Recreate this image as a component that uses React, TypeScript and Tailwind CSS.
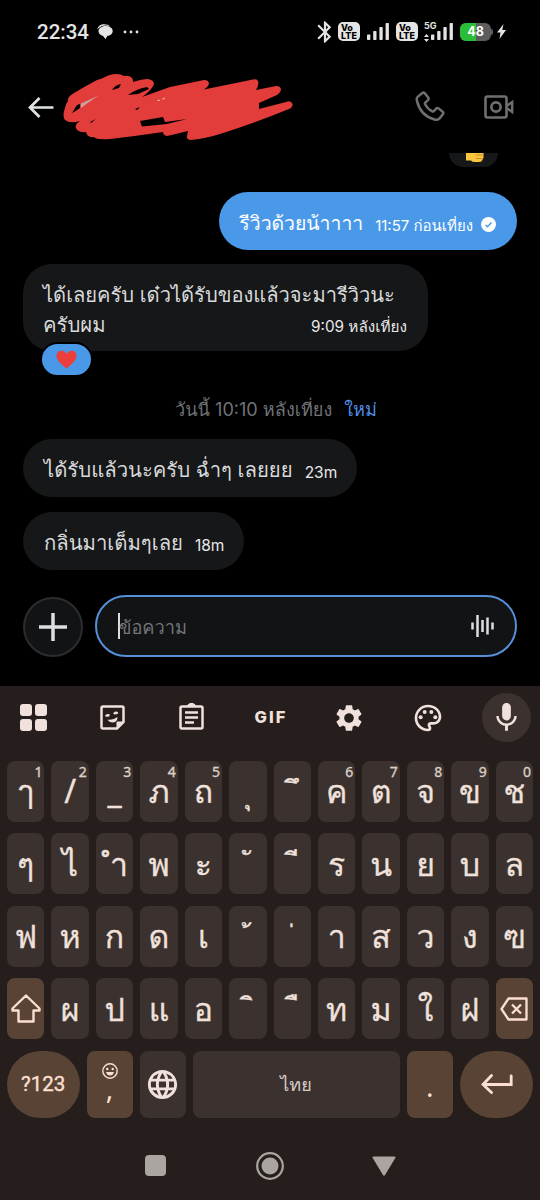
import React, { ReactNode } from "react"
import { MdBluetooth, MdLanguage, MdMic, MdOutlinePalette, MdSettings } from "react-icons/md"

type KeyType = { label: string, hint?: string, markClass?: string }

// Thai vowel and tone marks need a carrier, otherwise a dotted circle is drawn
const CARRIER = "\u00a0"

const VOWEL_ABOVE = "text-[27px] relative left-[3px] -top-0.5"
const VOWEL_BELOW = "text-[27px] relative top-0.5"
const SHORT_ABOVE = "text-[25px] relative -top-[3px]"
const TONE_ABOVE = "text-[26px] relative -left-px top-1"

const rowOne: KeyType[] = [
   { label: "ๅ", hint: "1" }, { label: "/", hint: "2" }, { label: "_", hint: "3" }, { label: "ภ", hint: "4" },
   { label: "ถ", hint: "5" }, mark("ุ", VOWEL_BELOW), mark("ึ", VOWEL_ABOVE), { label: "ค", hint: "6" },
   { label: "ต", hint: "7" }, { label: "จ", hint: "8" }, { label: "ข", hint: "9" }, { label: "ช", hint: "0" },
]
const rowTwo: KeyType[] = [
   ...toKeys(["ๆ", "ไ", CARRIER + "ำ", "พ", "ะ"]),
   mark("ั", SHORT_ABOVE), mark("ี", VOWEL_ABOVE),
   ...toKeys(["ร", "น", "ย", "บ", "ล"]),
]
const rowThree: KeyType[] = [
   ...toKeys(["ฟ", "ห", "ก", "ด", "เ"]),
   mark("้", TONE_ABOVE), mark("่", TONE_ABOVE),
   ...toKeys(["า", "ส", "ว", "ง", "ฃ"]),
]
const rowFour: KeyType[] = [
   ...toKeys(["ผ", "ป", "แ", "อ"]),
   mark("ิ", VOWEL_ABOVE), mark("ื", VOWEL_ABOVE),
   ...toKeys(["ท", "ม", "ใ", "ฝ"]),
]

function toKeys(labels: string[]): KeyType[] {
   return labels.map(label => ({ label }))
}

function mark(sign: string, markClass: string): KeyType {
   return { label: CARRIER + sign, markClass }
}

function App() {
   return (
      <div className="w-[540px] h-[1200px] flex flex-col overflow-hidden bg-black text-[#d9dadb] font-['Inter','Loma']">
         <StatusBar/>
         <ChatHeader/>
         <Conversation/>
         <MessageInput/>
         <Keyboard/>
      </div>
   )
}

export default App


function StatusBar() {
   return (
      <div className="h-[63px] flex shrink-0 items-center pl-[37px] pr-[34px] text-[#e4e4e4]">
         <span className="text-[20.500px] leading-none pt-0.5 font-medium font-['Roboto',sans-serif]">22:34</span>
         <svg className="ml-2" width="16" height="16" viewBox="0 0 16 16" fill="currentColor">
            <path d="M.3 5.500C.8 2 4 .2 7 .2c3 0 5 .8 6 2.200C10 1.200 7.500 1.200 5 2 3 2.700 1.500 4 .3 5.500z"/>
            <path d="M8.500 2C12.500 2 15.700 4 15.700 7s-2.700 4.600-5.200 4.800L8.500 15 6 12C3.500 11.500 1.500 9.500 1.500 7s3-5 7-5z"/>
         </svg>
         <svg className="ml-2.5" width="16" height="4" viewBox="0 0 16 4" fill="currentColor">
            <circle cx="2" cy="2" r="1.400"/><circle cx="8" cy="2" r="1.400"/><circle cx="14" cy="2" r="1.400"/>
         </svg>
         <div className="ml-auto flex items-center">
            <MdBluetooth className="-mr-[7px]" size={26}/>
            <VolteBadge/>
            <SignalBars/>
            <VolteBadge/>
            <div className="ml-1.5 -mr-[11px] w-[11px] h-5 flex flex-col justify-between">
               <span className="text-[9px] leading-[8px] font-bold">5G</span>
               <svg width="5" height="8" viewBox="0 0 5 8" fill="currentColor">
                  <path d="M2.500 0 5 3H0zM2.500 8 0 5h5z"/>
               </svg>
            </div>
            <SignalBars/>
            <div className="ml-[7px] relative w-[31px] h-[18px] rounded-md overflow-hidden bg-[#5c5c5e] flex items-center justify-center">
               <div className="absolute inset-y-0 left-0 w-4 bg-[#2bbd37]"/>
               <span className="relative top-px text-[12.500px] leading-none font-bold text-white">48</span>
            </div>
            <div className="w-0.5 h-1.5 rounded-r-sm bg-[#5c5c5e]"/>
            <svg className="ml-1" width="9" height="15" viewBox="0 0 9 15" fill="currentColor">
               <path d="M6.500 0 0 8.500h3.500L2.500 15 9 6H5.300z"/>
            </svg>
         </div>
      </div>
   )
}

function VolteBadge() {
   return (
      <div className="ml-[7px] w-[22px] h-[19px] rounded-[5px] bg-[#e4e4e4] text-black flex flex-col items-center justify-center font-extrabold text-[9px] leading-[8px]">
         <span className="-ml-1">Vo</span>
         <span>LTE</span>
      </div>
   )
}

function SignalBars() {
   return (
      <svg className="ml-[7px]" width="22" height="17" viewBox="0 0 22 17" fill="currentColor">
         <rect x="0" y="11.500" width="3.300" height="5.500" rx=".8"/>
         <rect x="6.200" y="8" width="3.300" height="9" rx=".8"/>
         <rect x="12.400" y="4" width="3.300" height="13" rx=".8"/>
         <rect x="18.600" y="0" width="3.300" height="17" rx=".8"/>
      </svg>
   )
}

function ChatHeader() {
   return (
      <div className="h-[90px] flex shrink-0 items-start pl-7 pr-[25px]">
         <svg className="mt-[34px]" width="26" height="21" viewBox="0 0 26 21" fill="none" stroke="#dfe2e3" strokeWidth="2.700">
            <path d="M11.500 1 2 10.500l9.500 9.500M2 10.500h23.500"/>
         </svg>
         <Scribble/>
         <svg className="ml-auto mt-7" width="30" height="31" viewBox="0 0 30 31" fill="none" stroke="#6f6f6f" strokeWidth="2.500">
            <path d="M7 2.200Q8.600.9 9.900 2.400L13.300 6.800Q14.100 8 13 9.100L10.300 11.700Q9.600 12.400 10.100 13.300 12.500 18 17.300 20.400 18.200 20.800 18.900 20.100L21.300 17.500Q22.400 16.500 23.600 17.400L27.600 20.700Q28.900 21.900 27.900 23.200L24.600 27.300Q22.500 29.400 19.500 28.500C10 25.800 4 18.800 1.900 9.600Q1.300 6.900 2.900 5.600z"/>
         </svg>
         <svg className="ml-[39px] mt-[32px]" width="31" height="24" viewBox="0 0 31 24" fill="none" stroke="#6f6f6f" strokeWidth="2.600">
            <rect x="1.500" y="1.500" width="21" height="21" rx="2"/>
            <circle cx="12" cy="12" r="4.600"/>
            <path d="M23 10.800 28.200 7v10L23 13.200" strokeWidth="2.400"/>
         </svg>
      </div>
   )
}

function Scribble() {
   return (
      <svg className="ml-[6px] mt-[7px]" width="236" height="72" viewBox="60 70 236 72">
         <path fill="#e23d3b" d="M68 101Q67 97 74 93L86 86 97 80Q101 79 103 78 110 74 116 74 121 74 124 76 131 75 133 80L133 82Q142 79 148 79 154 80 154 84 152 90 142 97 156 92 170 87L204 80Q209 80 209 84 208 87 204 89.500L253 79.500Q258 78 258.500 83 258 87 256 90L276 86Q281 86 281 90 280 93 277 95L259 103V109L286 102Q291 100 292.500 104 293 107 289 109 252 124 220 134 204 139 190 140 186 139 187 136L188 131Q176 134 167 136 163 135 163 132 136 136 110 139 96 140 94 137 87 138 86 132 77 133 75.500 127 76 123 80 121 70 124 65 120 62 116 65 108 66 103 68 101z"/>
         <path fill="#000" d="M72 113 77 105 80 104 80 108 74 112zM112 90Q115 85 121 84L119 88zM128 95Q136 89 147 87L149 89 138 94zM140 121 163 117 165 122 187 119 167 124 142 126.500zM90 122 96 119 91 123zM135 109 140 107 137 110z"/>
         <path fill="#c9a5a2" d="M81 103.500 99 95.500 89 102 81 108z"/>
         <path fill="#f3d3d0" d="M157 101 159 99.500 160 101zM162 99 165 97.500 164 99.500z"/>
      </svg>
   )
}

function Conversation() {
   return (
      <div className="h-[442px] flex flex-col items-start shrink-0 px-[23px] text-[20.300px]">
         <div className="self-end mr-[19px] w-[49px] h-[14px] shrink-0 rounded-b-[14px] overflow-hidden bg-[#161718] flex justify-center">
            <svg className="ml-0.5" width="18" height="9" viewBox="0 0 18 9">
               <path fill="#fcc73f" d="M0 0h17.500v4Q17.500 6 16.500 6.500 16 9 13 9H9Q6 9 5 7.500H0z"/>
               <path stroke="#c98a1c" strokeWidth="1" fill="none" d="M9.500 2h8M10 5.500h6.500"/>
            </svg>
         </div>
         <div className="mt-[25px] h-[58px] shrink-0 self-end rounded-[29px] bg-[#4a99e9] text-white pl-5 pr-[21px] flex items-baseline leading-[58px]">
            <span className="relative top-0.5 text-[19.400px]">รีวิวด้วยน้าาาา</span>
            <span className="ml-3 relative top-[3px] text-[15px]">11:57 ก่อนเที่ยง</span>
            <svg className="ml-2 relative top-[4px]" width="15" height="15" viewBox="0 0 15 15">
               <circle cx="7.500" cy="7.500" r="7.500" fill="#fff"/>
               <path d="M4.500 8l2 1.800L10.500 5.500" fill="none" stroke="#4a99e9" strokeWidth="1.400"/>
            </svg>
         </div>
         <div className="relative mt-3.5 w-[405px] h-[87px] shrink-0 rounded-[29px] bg-[#161718] pl-5 pr-[21px] pt-[17px] leading-[29px]">
            <p className="whitespace-nowrap text-[20.100px]">ได้เลยครับ เด๋วได้รับของแล้วจะมารีวิวนะ</p>
            <div className="flex justify-between items-baseline">
               <span>ครับผม</span>
               <span className="text-[15.300px] text-[#e8e8e8]">9:09 หลังเที่ยง</span>
            </div>
            <div className="absolute left-[17px] top-[78px] w-[53px] h-[35px] rounded-full border-2 border-black bg-[#4a99e9] flex items-center justify-center">
               <svg width="21" height="19" viewBox="0 0 22 19" fill="#ec3f3b">
                  <path d="M11 19C8 16 .5 11.500.5 5.500.5 2.500 2.800.3 5.600.3 8 .3 10 1.500 11 3.800 12 1.500 14 .3 16.400.3c2.800 0 5.100 2.200 5.100 5.200C21.500 11.500 14 16 11 19z"/>
               </svg>
            </div>
         </div>
         <div className="mt-[44px] h-[29.500px] shrink-0 self-center ml-3 flex items-center gap-3 text-[18.100px] text-[#6f7377]">
            <span>วันนี้ 10:10 หลังเที่ยง</span>
            <span className="text-[#4f8fe6]">ใหม่</span>
         </div>
         <ShortBubble text="ได้รับแล้วนะครับ ฉ่ำๆ เลยยย" time="23m"/>
         <ShortBubble text="กลิ่นมาเต็มๆเลย" time="18m"/>
      </div>
   )
}

function ShortBubble({ text, time }: { text: string, time: string }) {
   return (
      <div className="mt-[14.500px] h-[58px] shrink-0 rounded-[29px] bg-[#161718] pl-[21px] pr-5 flex items-baseline leading-[58px]">
         <span className="relative top-0.5 text-[20.300px]">{text}</span>
         <span className="ml-3 relative top-[3px] text-[15.500px] text-[#e8e8e8]">{time}</span>
      </div>
   )
}

function MessageInput() {
   return (
      <div className="h-[91px] shrink-0 flex items-start pl-[23px] pr-[23px]">
         <div className="mt-0.5 w-[60px] h-[60px] rounded-full border-2 border-[#2b2d2f] bg-[#121314] flex items-center justify-center">
            <svg width="28" height="28" viewBox="0 0 28 28" stroke="#dcdedf" strokeWidth="3.500">
               <path d="M14 0v28M0 14h28"/>
            </svg>
         </div>
         <div className="ml-3 grow h-[62px] rounded-full border-2 border-[#5690d8] bg-[#121314] flex items-center pl-[21px] pr-[21px]">
            <div className="w-0.5 h-[26px] bg-[#dcdedf]"/>
            <span className="relative top-0.5 -ml-px text-[18.200px] text-[#73767a]">ข้อความ</span>
            <svg className="ml-auto" width="23" height="22" viewBox="0 0 23 22" stroke="#dcdedf" strokeWidth="2.500">
               <path d="M1.500 7.500v7M6.500 0v22M11.500 5v12M16.500 2.500v17M21.500 7.500v7"/>
            </svg>
         </div>
      </div>
   )
}

function Keyboard() {
   return (
      <div className="grow bg-[#251e1c] text-[#f0e1dc] font-['Noto_Sans','Loma'] flex flex-col">
         <Toolbar/>
         <div className="mt-[11.500px] px-[7px] flex flex-col gap-[11.500px]">
            <KeyRow>{rowOne.map((key, i) => <Key key={i} {...key}/>)}</KeyRow>
            <KeyRow>{rowTwo.map((key, i) => <Key key={i} {...key}/>)}</KeyRow>
            <KeyRow>{rowThree.map((key, i) => <Key key={i} {...key}/>)}</KeyRow>
            <KeyRow>
               <div className="flex-1 h-[61px] rounded-lg bg-[#594334] flex items-center justify-center">
                  <svg width="30" height="29" viewBox="0 0 30 29" fill="none" stroke="#fbdfd0" strokeWidth="2.400" strokeLinejoin="round">
                     <path d="M15 1.500 28.500 14.500V16.500H22.500V27.500H7.500V16.500H1.500V14.500z"/>
                  </svg>
               </div>
               {rowFour.map((key, i) => <Key key={i} {...key}/>)}
               <div className="flex-1 h-[61px] rounded-lg bg-[#594334] flex items-center justify-center">
                  <svg width="28" height="24" viewBox="0 0 28 24" fill="none" stroke="#fbdfd0" strokeWidth="2.300" strokeLinejoin="round">
                     <path d="M8.500 1.500H26.500V22.500H8.500L1.500 12z"/>
                     <path d="M12 7.500l9 9M21 7.500l-9 9"/>
                  </svg>
               </div>
            </KeyRow>
            <BottomRow/>
         </div>
         <NavigationBar/>
      </div>
   )
}

function Toolbar() {
   return (
      <div className="h-[63px] -mx-1.5 flex">
         <ToolbarItem>
            <svg width="27" height="27" viewBox="0 0 27 27" fill="currentColor">
               <rect width="12" height="12" rx="3"/><rect x="15" width="12" height="12" rx="3"/>
               <rect y="15" width="12" height="12" rx="3"/><rect x="15" y="15" width="12" height="12" rx="3"/>
            </svg>
         </ToolbarItem>
         <ToolbarItem>
            <svg width="25" height="25" viewBox="0 0 25 25" fill="none" stroke="currentColor" strokeWidth="2.500">
               <path d="M3 1.500H22Q23.500 1.500 23.500 3V17L17 23.500H3Q1.500 23.500 1.500 22V3Q1.500 1.500 3 1.500z"/>
               <path d="M17 23.500V17H23.500z" fill="currentColor" strokeWidth="1"/>
               <path d="M6 11.500Q7 9.500 9.500 10.500M14 9Q16 6.800 17.500 8.700"/>
               <path d="M7.500 14.500Q13 15.500 17.500 12 17.500 17 13 17.500 9 17.500 7.500 14.500z" fill="currentColor" stroke="none"/>
            </svg>
         </ToolbarItem>
         <ToolbarItem>
            <svg className="-mt-0.5" width="25" height="27" viewBox="0 0 25 27" fill="none" stroke="currentColor" strokeWidth="2.500">
               <rect x="1.500" y="3.500" width="22" height="22" rx="1.500"/>
               <path d="M6 9.500h13M6 14.500h13M6 19.500h9"/>
               <path d="M8.500 3Q12.500-2 16.500 3z" fill="currentColor" strokeWidth="1.500"/>
            </svg>
         </ToolbarItem>
         <ToolbarItem>
            <span className="font-['Inter',sans-serif] font-extrabold text-[16.500px] leading-none tracking-[2px] -mr-0.5">GIF</span>
         </ToolbarItem>
         <ToolbarItem><MdSettings size={32}/></ToolbarItem>
         <ToolbarItem><MdOutlinePalette size={32}/></ToolbarItem>
         <ToolbarItem>
            <div className="w-[49px] h-[49px] rounded-full bg-[#3b322f] flex items-center justify-center">
               <MdMic size={35}/>
            </div>
         </ToolbarItem>
      </div>
   )
}

function ToolbarItem({ children }: { children: ReactNode }) {
   return <div className="flex-1 flex items-center justify-center">{children}</div>
}

function KeyRow({ children }: { children: ReactNode }) {
   return <div className="flex gap-[7px]">{children}</div>
}

function Key({ label, hint, markClass }: KeyType) {
   return (
      <div className="relative flex-1 h-[61px] rounded-lg bg-[#3b322f] flex items-center justify-center text-[32px] leading-none [-webkit-text-stroke:0.3px_#f0e1dc]">
         <span className={markClass ?? "relative"}>{label}</span>
         {hint && <span className="absolute top-1 right-[2px] text-[14px] leading-none text-[#d0c3be]">{hint}</span>}
      </div>
   )
}

function BottomRow() {
   return (
      <div className="h-[67px] flex gap-[7px]">
         <div className="w-[72.500px] rounded-[36px] bg-[#594334] text-[#fbdfd0] flex items-center justify-center text-[20.500px] font-['Roboto',sans-serif] [-webkit-text-stroke:0.4px_#fbdfd0]">
            ?123
         </div>
         <div className="w-[46px] rounded-lg bg-[#594334] text-[#fbdfd0] flex flex-col items-center pt-3">
            <svg width="16" height="16" viewBox="0 0 16 16" fill="currentColor">
               <circle cx="8" cy="8" r="7.200" fill="none" stroke="currentColor" strokeWidth="1.400"/>
               <circle cx="5.300" cy="6" r="1.200"/><circle cx="10.700" cy="6" r="1.200"/>
               <path d="M4 9h8Q11 12.500 8 12.500T4 9z"/>
            </svg>
            <span className="text-[28px] leading-[19px]">,</span>
         </div>
         <div className="w-[46px] rounded-lg bg-[#3b322f] flex items-center justify-center">
            <MdLanguage size={35}/>
         </div>
         <div className="grow rounded-lg bg-[#3b322f] text-[#d8cbc6] flex items-center justify-center text-[18px]">ไทย</div>
         <div className="w-[46.500px] rounded-lg bg-[#594334] text-[#fbdfd0] flex items-center justify-center text-[28px] leading-none">
            <span className="mt-1">.</span>
         </div>
         <div className="w-[73px] rounded-[36px] bg-[#594334] flex items-center justify-center">
            <svg width="32" height="20" viewBox="0 0 32 20" fill="none" stroke="#fbdfd0" strokeWidth="2.800" strokeLinecap="round">
               <path d="M30.200 2v8.500H2M10.500 1.500 2 10.500l8.500 8"/>
            </svg>
         </div>
      </div>
   )
}

function NavigationBar() {
   return (
      <div className="mt-[33px] h-[30px] flex items-center justify-center gap-[90px] text-[#aba5a2]">
         <div className="w-[21px] h-[21px] rounded-[4px] bg-current"/>
         <svg width="28" height="28" viewBox="0 0 28 28" fill="currentColor">
            <circle cx="14" cy="14" r="12.800" fill="none" stroke="currentColor" strokeWidth="2.200"/>
            <circle cx="14" cy="14" r="8.500"/>
         </svg>
         <svg className="-ml-0.5" width="24" height="20" viewBox="0 0 24 20" fill="currentColor">
            <path d="M1.500.5h21Q24 .5 23.300 2L13 19Q12 20.300 11 19L.7 2Q0 .5 1.500.5z"/>
         </svg>
      </div>
   )
}
